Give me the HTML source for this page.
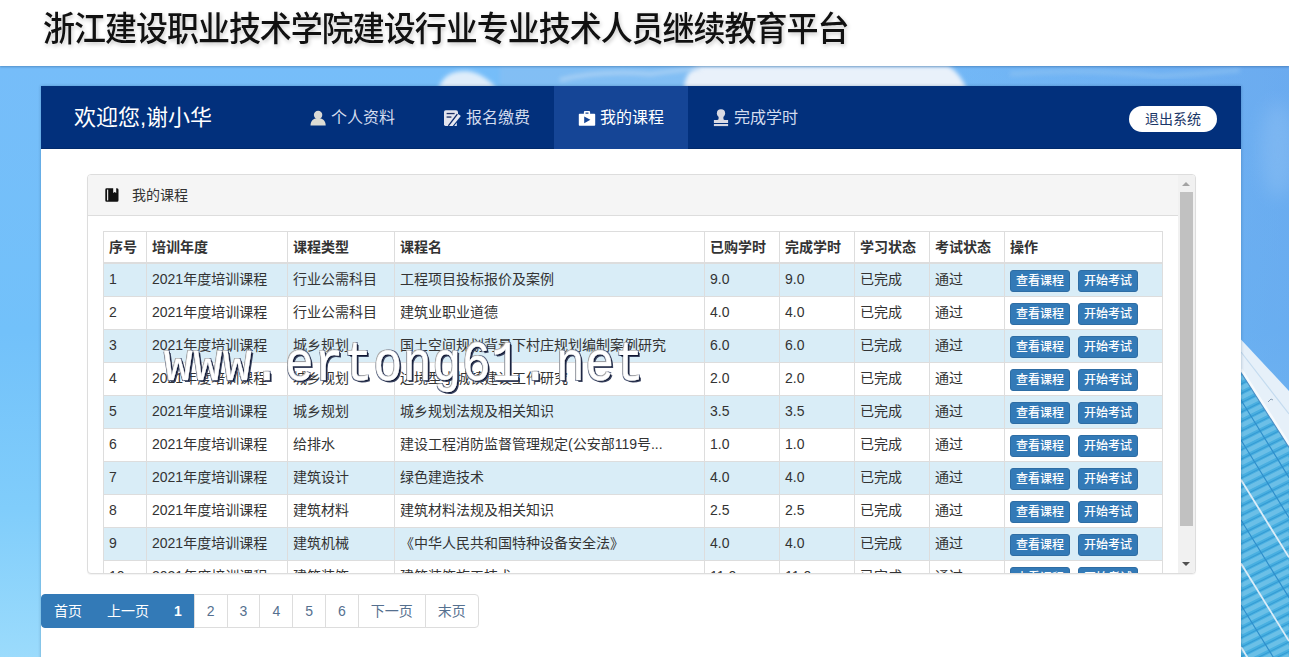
<!DOCTYPE html>
<html lang="zh-CN">
<head>
<meta charset="utf-8">
<title>浙江建设职业技术学院建设行业专业技术人员继续教育平台</title>
<style>
*{box-sizing:border-box;}
html,body{margin:0;padding:0;}
body{width:1289px;height:657px;overflow:hidden;position:relative;background:#fff;
  font-family:"Liberation Sans","Noto Sans CJK SC",sans-serif;font-size:14px;line-height:20px;color:#333;}
.hdr{position:absolute;left:0;top:0;width:1289px;height:66px;background:#fff;z-index:3;box-shadow:0 1px 2px rgba(0,40,90,.3);}
.hdr h1{position:absolute;left:43px;top:7px;margin:0;font-size:32px;line-height:44px;font-weight:500;color:#111;
  white-space:nowrap;letter-spacing:-1.02px;text-shadow:0 0 1px #fff,1px 2px 4px rgba(0,0,0,.24);transform-origin:0 50%;transform:scale(1,1.05);}
.sky{position:absolute;left:0;top:66px;width:1289px;height:591px;z-index:1;
  background:linear-gradient(90deg,rgba(96,150,228,0) 0%,rgba(96,150,228,0) 62%,rgba(92,146,226,.42) 100%),linear-gradient(180deg,#76bdf9 0%,#72c1fa 45%,#80cdfb 75%,#9bdbfc 100%);}
.sky svg{position:absolute;left:0;top:0;}
.wrap{position:absolute;left:41px;top:86px;width:1200px;height:580px;background:#fff;z-index:2;box-shadow:0 0 3px rgba(0,50,90,.3);}
.nav{position:absolute;left:0;top:0;width:1200px;height:63px;background:#02307c;border-bottom:1px solid #012a6c;}
.nav .hello{position:absolute;left:33px;top:15px;font-size:22px;line-height:34px;color:#fff;white-space:nowrap;}
.nav .it{position:absolute;top:0;height:63px;font-size:16px;line-height:63px;color:#d3dcee;white-space:nowrap;}
.nav .it.act{background:#154596;color:#fff;}
.nav .it svg{position:absolute;top:24px;}
.nav .it span{position:absolute;top:0;}
.nav .out{position:absolute;left:1088px;top:20px;width:88px;height:26px;border-radius:13px;background:#fff;color:#1a3668;
  font-size:14px;line-height:26px;text-align:center;}
.panel{position:absolute;left:46px;top:88px;width:1109px;height:400px;border:1px solid #ddd;border-radius:4px;background:#fff;overflow:hidden;
  box-shadow:0 1px 1px rgba(0,0,0,.05);}
.phead{position:absolute;left:0;top:0;width:1090px;height:41px;background:#f5f5f5;border-bottom:1px solid #ddd;padding:10px 15px;color:#333;}
.phead svg{position:absolute;left:17px;top:13px;}
.phead span{position:absolute;left:44px;top:10px;}
.sb{position:absolute;left:1090px;top:0;width:17px;height:398px;background:#f1f1f1;}
.sb .th{position:absolute;left:2px;top:17px;width:13px;height:334px;background:#c1c1c1;}
.sb .up{position:absolute;left:4px;top:7px;width:0;height:0;border-left:4.5px solid transparent;border-right:4.5px solid transparent;border-bottom:4px solid #a3a3a3;}
.sb .dn{position:absolute;left:4px;top:387px;width:0;height:0;border-left:4.5px solid transparent;border-right:4.5px solid transparent;border-top:4px solid #505050;}
table{position:absolute;left:15px;top:56px;width:1059px;border-collapse:collapse;table-layout:fixed;border:1px solid #ddd;}
th,td{border:1px solid #ddd;padding:5px;text-align:left;vertical-align:top;line-height:20px;white-space:nowrap;overflow:hidden;text-overflow:ellipsis;font-weight:400;height:33px;}
th{font-weight:700;border-bottom-width:2px;height:31px;color:#333;}
tr.info td{background:#d9edf7;}
.btn{display:inline-block;height:22px;padding:1px 5px;font-size:12px;font-weight:500;line-height:18px;border:1px solid #2e6da4;background:#337ab7;color:#fff;border-radius:3px;vertical-align:middle;margin-right:8px;}
td.op{padding-top:5px;padding-bottom:0;line-height:22px;}
.pg{position:absolute;left:0;top:508px;height:34px;margin:0;padding:0;list-style:none;white-space:nowrap;font-size:0;}
.pg li{display:inline-block;height:34px;padding:6px 12px;border:1px solid #ddd;margin-left:-1px;font-size:14px;line-height:20px;color:#55708f;background:#fff;vertical-align:top;}
.pg li.a{background:#337ab7;border-color:#337ab7;color:#fff;}
.pg li:first-child{margin-left:0;border-radius:4px 0 0 4px;}
.pg li:last-child{border-radius:0 4px 4px 0;}
.wm{position:absolute;left:164px;top:333.6px;width:490px;height:60px;z-index:5;font-family:"Liberation Mono",monospace;font-size:48px;line-height:54px;color:#fff;white-space:nowrap;
  letter-spacing:0.7px;transform-origin:0 0;transform:scale(1,1.15);-webkit-text-stroke:0.4px #fff;
  text-shadow:1px 1px 0 #0d1530,2px 2px 0 #39425e,-1px -1px 0 #a9a9a9,1px -1px 0 #5a6684,-1px 1px 0 #5a6684;}
.wm span{position:absolute;top:0;}
</style>
</head>
<body>
<div class="hdr"><h1>浙江建设职业技术学院建设行业专业技术人员继续教育平台</h1></div>
<div class="sky">
<svg width="1289" height="591" viewBox="0 0 1289 591">
<defs><filter id="b1" x="-20%" y="-50%" width="140%" height="200%"><feGaussianBlur stdDeviation="2.2"/></filter><filter id="b3" x="-100%" y="-50%" width="300%" height="200%"><feGaussianBlur stdDeviation="9"/></filter><filter id="b2" x="-20%" y="-50%" width="140%" height="200%"><feGaussianBlur stdDeviation="1.2"/></filter><linearGradient id="gl" x1="0" y1="0" x2="0" y2="1"><stop offset="0" stop-color="#4aaee0"/><stop offset="1" stop-color="#48b0e1"/></linearGradient><clipPath id="cg"><path d="M1241 372 L1289 447 L1289 657 L1241 657 Z"/></clipPath><clipPath id="ct"><rect x="0" y="66" width="1289" height="21"/></clipPath></defs>
<g transform="translate(0,-66)">
<g clip-path="url(#ct)">
<rect x="500" y="66" width="200" height="21" fill="#8cc0f0" opacity=".55" filter="url(#b1)"/>
<path d="M438 92 Q440 78 452 73 Q468 68 482 76 Q494 83 500 94 Z" fill="#e8f2fb" opacity=".92" filter="url(#b1)"/>
<path d="M684 92 Q684 70 700 66 L948 66 Q960 72 968 92 Z" fill="#e9f1fa" filter="url(#b1)"/>
<path d="M560 80 Q600 70 650 74 Q680 70 700 68" stroke="#b9d8f5" stroke-width="4" fill="none" opacity=".7" filter="url(#b1)"/>
<path d="M1010 74 Q1080 68 1160 76 Q1200 74 1240 70" stroke="#8fc3f2" stroke-width="5" fill="none" opacity=".6" filter="url(#b1)"/>
</g>
<ellipse cx="1278" cy="150" rx="18" ry="48" fill="#a4cef6" opacity=".3" filter="url(#b3)"/><path d="M1241 339.5 L1289 391 L1289 447 L1241 372 Z" fill="#e6f0f9"/>
<path d="M1241 352 L1289 414" stroke="#c4dbef" stroke-width="1.2" fill="none"/>
<path d="M1241 372 L1289 447 L1289 657 L1241 657 Z" fill="url(#gl)"/>
<g clip-path="url(#cg)">
<path d="M1241 360.0 L1289 336.0" stroke="#8ed0ee" stroke-width="4.4" opacity=".5"/>
<path d="M1241 365.2 L1289 341.2" stroke="#2f96d0" stroke-width="1.1" opacity=".75"/>
<path d="M1241 369.4 L1289 345.4" stroke="#8ed0ee" stroke-width="4.4" opacity=".5"/>
<path d="M1241 374.6 L1289 350.6" stroke="#2f96d0" stroke-width="1.1" opacity=".75"/>
<path d="M1241 378.8 L1289 354.8" stroke="#8ed0ee" stroke-width="4.4" opacity=".5"/>
<path d="M1241 384.0 L1289 360.0" stroke="#2f96d0" stroke-width="1.1" opacity=".75"/>
<path d="M1241 388.2 L1289 364.2" stroke="#8ed0ee" stroke-width="4.4" opacity=".5"/>
<path d="M1241 393.4 L1289 369.4" stroke="#2f96d0" stroke-width="1.1" opacity=".75"/>
<path d="M1241 397.6 L1289 373.6" stroke="#8ed0ee" stroke-width="4.4" opacity=".5"/>
<path d="M1241 402.8 L1289 378.8" stroke="#2f96d0" stroke-width="1.1" opacity=".75"/>
<path d="M1241 407.0 L1289 383.0" stroke="#8ed0ee" stroke-width="4.4" opacity=".5"/>
<path d="M1241 412.2 L1289 388.2" stroke="#2f96d0" stroke-width="1.1" opacity=".75"/>
<path d="M1241 416.4 L1289 392.4" stroke="#8ed0ee" stroke-width="4.4" opacity=".5"/>
<path d="M1241 421.6 L1289 397.6" stroke="#2f96d0" stroke-width="1.1" opacity=".75"/>
<path d="M1241 425.8 L1289 401.8" stroke="#8ed0ee" stroke-width="4.4" opacity=".5"/>
<path d="M1241 431.0 L1289 407.0" stroke="#2f96d0" stroke-width="1.1" opacity=".75"/>
<path d="M1241 435.2 L1289 411.2" stroke="#8ed0ee" stroke-width="4.4" opacity=".5"/>
<path d="M1241 440.4 L1289 416.4" stroke="#2f96d0" stroke-width="1.1" opacity=".75"/>
<path d="M1241 444.6 L1289 420.6" stroke="#8ed0ee" stroke-width="4.4" opacity=".5"/>
<path d="M1241 449.8 L1289 425.8" stroke="#2f96d0" stroke-width="1.1" opacity=".75"/>
<path d="M1241 454.0 L1289 430.0" stroke="#8ed0ee" stroke-width="4.4" opacity=".5"/>
<path d="M1241 459.2 L1289 435.2" stroke="#2f96d0" stroke-width="1.1" opacity=".75"/>
<path d="M1241 463.4 L1289 439.4" stroke="#8ed0ee" stroke-width="4.4" opacity=".5"/>
<path d="M1241 468.6 L1289 444.6" stroke="#2f96d0" stroke-width="1.1" opacity=".75"/>
<path d="M1241 472.8 L1289 448.8" stroke="#8ed0ee" stroke-width="4.4" opacity=".5"/>
<path d="M1241 478.0 L1289 454.0" stroke="#2f96d0" stroke-width="1.1" opacity=".75"/>
<path d="M1241 482.2 L1289 458.2" stroke="#8ed0ee" stroke-width="4.4" opacity=".5"/>
<path d="M1241 487.4 L1289 463.4" stroke="#2f96d0" stroke-width="1.1" opacity=".75"/>
<path d="M1241 491.6 L1289 467.6" stroke="#8ed0ee" stroke-width="4.4" opacity=".5"/>
<path d="M1241 496.8 L1289 472.8" stroke="#2f96d0" stroke-width="1.1" opacity=".75"/>
<path d="M1241 501.0 L1289 477.0" stroke="#8ed0ee" stroke-width="4.4" opacity=".5"/>
<path d="M1241 506.2 L1289 482.2" stroke="#2f96d0" stroke-width="1.1" opacity=".75"/>
<path d="M1241 510.4 L1289 486.4" stroke="#8ed0ee" stroke-width="4.4" opacity=".5"/>
<path d="M1241 515.6 L1289 491.6" stroke="#2f96d0" stroke-width="1.1" opacity=".75"/>
<path d="M1241 519.8 L1289 495.8" stroke="#8ed0ee" stroke-width="4.4" opacity=".5"/>
<path d="M1241 525.0 L1289 501.0" stroke="#2f96d0" stroke-width="1.1" opacity=".75"/>
<path d="M1241 529.2 L1289 505.2" stroke="#8ed0ee" stroke-width="4.4" opacity=".5"/>
<path d="M1241 534.4 L1289 510.4" stroke="#2f96d0" stroke-width="1.1" opacity=".75"/>
<path d="M1241 538.6 L1289 514.6" stroke="#8ed0ee" stroke-width="4.4" opacity=".5"/>
<path d="M1241 543.8 L1289 519.8" stroke="#2f96d0" stroke-width="1.1" opacity=".75"/>
<path d="M1241 548.0 L1289 524.0" stroke="#8ed0ee" stroke-width="4.4" opacity=".5"/>
<path d="M1241 553.2 L1289 529.2" stroke="#2f96d0" stroke-width="1.1" opacity=".75"/>
<path d="M1241 557.4 L1289 533.4" stroke="#8ed0ee" stroke-width="4.4" opacity=".5"/>
<path d="M1241 562.6 L1289 538.6" stroke="#2f96d0" stroke-width="1.1" opacity=".75"/>
<path d="M1241 566.8 L1289 542.8" stroke="#8ed0ee" stroke-width="4.4" opacity=".5"/>
<path d="M1241 572.0 L1289 548.0" stroke="#2f96d0" stroke-width="1.1" opacity=".75"/>
<path d="M1241 576.2 L1289 552.2" stroke="#8ed0ee" stroke-width="4.4" opacity=".5"/>
<path d="M1241 581.4 L1289 557.4" stroke="#2f96d0" stroke-width="1.1" opacity=".75"/>
<path d="M1241 585.6 L1289 561.6" stroke="#8ed0ee" stroke-width="4.4" opacity=".5"/>
<path d="M1241 590.8 L1289 566.8" stroke="#2f96d0" stroke-width="1.1" opacity=".75"/>
<path d="M1241 595.0 L1289 571.0" stroke="#8ed0ee" stroke-width="4.4" opacity=".5"/>
<path d="M1241 600.2 L1289 576.2" stroke="#2f96d0" stroke-width="1.1" opacity=".75"/>
<path d="M1241 604.4 L1289 580.4" stroke="#8ed0ee" stroke-width="4.4" opacity=".5"/>
<path d="M1241 609.6 L1289 585.6" stroke="#2f96d0" stroke-width="1.1" opacity=".75"/>
<path d="M1241 613.8 L1289 589.8" stroke="#8ed0ee" stroke-width="4.4" opacity=".5"/>
<path d="M1241 619.0 L1289 595.0" stroke="#2f96d0" stroke-width="1.1" opacity=".75"/>
<path d="M1241 623.2 L1289 599.2" stroke="#8ed0ee" stroke-width="4.4" opacity=".5"/>
<path d="M1241 628.4 L1289 604.4" stroke="#2f96d0" stroke-width="1.1" opacity=".75"/>
<path d="M1241 632.6 L1289 608.6" stroke="#8ed0ee" stroke-width="4.4" opacity=".5"/>
<path d="M1241 637.8 L1289 613.8" stroke="#2f96d0" stroke-width="1.1" opacity=".75"/>
<path d="M1241 642.0 L1289 618.0" stroke="#8ed0ee" stroke-width="4.4" opacity=".5"/>
<path d="M1241 647.2 L1289 623.2" stroke="#2f96d0" stroke-width="1.1" opacity=".75"/>
<path d="M1241 651.4 L1289 627.4" stroke="#8ed0ee" stroke-width="4.4" opacity=".5"/>
<path d="M1241 656.6 L1289 632.6" stroke="#2f96d0" stroke-width="1.1" opacity=".75"/>
<path d="M1241 660.8 L1289 636.8" stroke="#8ed0ee" stroke-width="4.4" opacity=".5"/>
<path d="M1241 666.0 L1289 642.0" stroke="#2f96d0" stroke-width="1.1" opacity=".75"/>
<path d="M1241 670.2 L1289 646.2" stroke="#8ed0ee" stroke-width="4.4" opacity=".5"/>
<path d="M1241 675.4 L1289 651.4" stroke="#2f96d0" stroke-width="1.1" opacity=".75"/>
<path d="M1241 679.6 L1289 655.6" stroke="#8ed0ee" stroke-width="4.4" opacity=".5"/>
<path d="M1241 684.8 L1289 660.8" stroke="#2f96d0" stroke-width="1.1" opacity=".75"/>
<path d="M1241 689.0 L1289 665.0" stroke="#8ed0ee" stroke-width="4.4" opacity=".5"/>
<path d="M1241 694.2 L1289 670.2" stroke="#2f96d0" stroke-width="1.1" opacity=".75"/>
<path d="M1241 698.4 L1289 674.4" stroke="#8ed0ee" stroke-width="4.4" opacity=".5"/>
<path d="M1241 400 L1289 477.6" stroke="#2e8ecb" stroke-width="1.1"/>
<path d="M1241 440 L1289 517.6" stroke="#2e8ecb" stroke-width="1.1"/>
<path d="M1241 520 L1289 597.6" stroke="#2e8ecb" stroke-width="1.1"/>
<path d="M1241 605 L1289 682.6" stroke="#2e8ecb" stroke-width="1.1"/>
<path d="M1241 479.8 L1289 557.4" stroke="#dcedf8" stroke-width="1.8"/>
<path d="M1241 563.5 L1289 641.1" stroke="#dcedf8" stroke-width="1.8"/>
<path d="M1241 647 L1289 724.6" stroke="#dcedf8" stroke-width="1.8"/>
</g>
<path d="M1241 369.5 L1289 444.5" stroke="#f6fafd" stroke-width="3" fill="none"/><path d="M1241 372.5 L1289 447.5" stroke="#4f8fc4" stroke-width="1.1" fill="none"/>
<path d="M1268 402 l3 -3 l2 1" stroke="#8aa0b6" stroke-width="1" fill="none"/>
</g>
</svg>
</div>
<div class="wrap">
  <div class="nav">
    <div class="hello">欢迎您,谢小华</div>
    <div class="it" style="left:245px;width:134px;"><svg style="left:24px;top:24px" width="18" height="18" viewBox="0 0 18 18"><circle cx="8.1" cy="5" r="4.2" fill="#dadad6"/><path d="M0.5 15.6 C0.5 11.4 3.2 9 5.4 8.6 L10.8 8.6 C13 9 15.7 11.4 15.7 15.6 Z" fill="#dcdcd4"/></svg><span style="left:45px;">个人资料</span></div>
    <div class="it" style="left:379px;width:134px;"><svg style="left:23px;top:23px" width="20" height="20" viewBox="0 0 20 20"><path d="M2.6 1.2 H13 Q15 1.2 15 3.2 V6.2 L6.4 16.9 H2.6 Q1 16.9 1 15.3 V2.8 Q1 1.2 2.6 1.2 Z" fill="#e2e4ee"/><rect x="3.6" y="3.9" width="8" height="1.3" fill="#1c2f66"/><rect x="3.6" y="7.4" width="4.8" height="1.3" fill="#1c2f66"/><path d="M14.4 5.2 L5.4 16.9" stroke="#0e2a6a" stroke-width="1.5" fill="none"/><path d="M15.5 5.0 L17.8 7.0 L9.7 16.9 H6.2 Z" fill="#e6e8f1"/><path d="M11.2 16.9 L13.8 13.6 L13.8 16.9 Z" fill="#dfe2ee"/></svg><span style="left:46px;">报名缴费</span></div>
    <div class="it act" style="left:513px;width:134px;"><svg style="left:24px;top:24px" width="18" height="18" viewBox="0 0 18 18"><path fill-rule="evenodd" d="M1.6 3.7 H5.9 V2 Q5.9 0.9 7 0.9 H11 Q12.1 0.9 12.1 2 V3.7 H16.4 Q17.2 3.7 17.2 4.5 V15 Q17.2 15.8 16.4 15.8 H1.6 Q0.8 15.8 0.8 15 V4.5 Q0.8 3.7 1.6 3.7 Z M7.5 2.4 V3.7 H10.5 V2.4 Z M6.2 6.5 V13.2 L12.4 9.85 Z" fill="#fff"/></svg><span style="left:46px;">我的课程</span></div>
    <div class="it" style="left:647px;width:134px;"><svg style="left:25px;top:22px" width="18" height="20" viewBox="0 0 18 20"><circle cx="8" cy="5.3" r="4.1" fill="#d9dae4"/><path d="M5.6 7 H10.4 V10.5 Q10.4 12 12 12.1 H15.1 V15 H0.9 V12.1 H4 Q5.6 12 5.6 10.5 Z" fill="#d9dae4"/><rect x="0.9" y="16" width="14.2" height="2.1" fill="#d4d6e2"/></svg><span style="left:46px;">完成学时</span></div>
    <div class="out">退出系统</div>
  </div>
  <div class="panel">
    <div class="phead"><svg width="16" height="16" viewBox="0 0 16 16"><path d="M1.6 0.3 H8.2 V5 L9.7 3.9 L11.2 5 V0.3 H12 Q13.5 0.3 13.5 1.8 V12.3 Q13.5 13.8 12 13.8 H1.6 Q0.3 13.8 0.3 12.4 V1.7 Q0.3 0.3 1.6 0.3 Z" fill="#111"/><rect x="2.1" y="1.6" width="1.1" height="10.8" fill="#fff"/></svg><span>我的课程</span></div>
    <table>
      <colgroup><col style="width:43px"><col style="width:141px"><col style="width:107px"><col style="width:310px"><col style="width:75px"><col style="width:75px"><col style="width:75px"><col style="width:75px"><col style="width:158px"></colgroup>
      <thead><tr><th>序号</th><th>培训年度</th><th>课程类型</th><th>课程名</th><th>已购学时</th><th>完成学时</th><th>学习状态</th><th>考试状态</th><th>操作</th></tr></thead>
      <tbody>
      <tr class="info"><td>1</td><td>2021年度培训课程</td><td>行业公需科目</td><td>工程项目投标报价及案例</td><td>9.0</td><td>9.0</td><td>已完成</td><td>通过</td><td class="op"><span class="btn">查看课程</span><span class="btn">开始考试</span></td></tr>
      <tr><td>2</td><td>2021年度培训课程</td><td>行业公需科目</td><td>建筑业职业道德</td><td>4.0</td><td>4.0</td><td>已完成</td><td>通过</td><td class="op"><span class="btn">查看课程</span><span class="btn">开始考试</span></td></tr>
      <tr class="info"><td>3</td><td>2021年度培训课程</td><td>城乡规划</td><td>国土空间规划背景下村庄规划编制案例研究</td><td>6.0</td><td>6.0</td><td>已完成</td><td>通过</td><td class="op"><span class="btn">查看课程</span><span class="btn">开始考试</span></td></tr>
      <tr><td>4</td><td>2021年度培训课程</td><td>城乡规划</td><td>边境型小城镇建设工作研究</td><td>2.0</td><td>2.0</td><td>已完成</td><td>通过</td><td class="op"><span class="btn">查看课程</span><span class="btn">开始考试</span></td></tr>
      <tr class="info"><td>5</td><td>2021年度培训课程</td><td>城乡规划</td><td>城乡规划法规及相关知识</td><td>3.5</td><td>3.5</td><td>已完成</td><td>通过</td><td class="op"><span class="btn">查看课程</span><span class="btn">开始考试</span></td></tr>
      <tr><td>6</td><td>2021年度培训课程</td><td>给排水</td><td>建设工程消防监督管理规定(公安部119号...</td><td>1.0</td><td>1.0</td><td>已完成</td><td>通过</td><td class="op"><span class="btn">查看课程</span><span class="btn">开始考试</span></td></tr>
      <tr class="info"><td>7</td><td>2021年度培训课程</td><td>建筑设计</td><td>绿色建造技术</td><td>4.0</td><td>4.0</td><td>已完成</td><td>通过</td><td class="op"><span class="btn">查看课程</span><span class="btn">开始考试</span></td></tr>
      <tr><td>8</td><td>2021年度培训课程</td><td>建筑材料</td><td>建筑材料法规及相关知识</td><td>2.5</td><td>2.5</td><td>已完成</td><td>通过</td><td class="op"><span class="btn">查看课程</span><span class="btn">开始考试</span></td></tr>
      <tr class="info"><td>9</td><td>2021年度培训课程</td><td>建筑机械</td><td>《中华人民共和国特种设备安全法》</td><td>4.0</td><td>4.0</td><td>已完成</td><td>通过</td><td class="op"><span class="btn">查看课程</span><span class="btn">开始考试</span></td></tr>
      <tr><td>10</td><td>2021年度培训课程</td><td>建筑装饰</td><td>建筑装饰施工技术</td><td>11.0</td><td>11.0</td><td>已完成</td><td>通过</td><td class="op"><span class="btn">查看课程</span><span class="btn">开始考试</span></td></tr>
      </tbody>
    </table>
    <div class="sb"><div class="up"></div><div class="th"></div><div class="dn"></div></div>
  </div>
  <ul class="pg"><li class="a">首页</li><li class="a">上一页</li><li class="a"><b>1</b></li><li>2</li><li>3</li><li>4</li><li>5</li><li>6</li><li>下一页</li><li>末页</li></ul>
</div>
<div class="wm"><span style="left:0">www.</span> <span style="left:121px">ertong61.</span> <span style="left:392px">net</span></div>
</body>
</html>
